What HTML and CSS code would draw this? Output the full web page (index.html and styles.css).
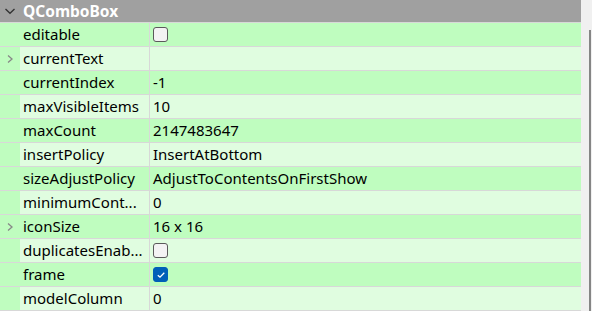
FILE: index.html
```html
<!DOCTYPE html>
<html>
<head>
<meta charset="utf-8">
<link rel="stylesheet" href="styles.css">
</head>
<body>
<div class="wrap">
  <div class="tree">
    <div class="group">
      <span class="branch"><svg width="12" height="8" viewBox="0 0 12 8"><path d="M1.5 2 L6 6.2 L10.5 2" fill="none" stroke="#333" stroke-width="1.4"/></svg></span>
      <span class="gtitle">QComboBox</span>
    </div>
    <div class="row dark"><span class="branch"></span><span class="name">editable</span><span class="val"><span class="cb"></span></span></div>
    <div class="row light"><span class="branch"><svg width="8" height="10" viewBox="0 0 8 10"><path d="M2 1.5 L6 5 L2 8.5" fill="none" stroke="#888" stroke-width="1.3"/></svg></span><span class="name">currentText</span><span class="val"></span></div>
    <div class="row dark"><span class="branch"></span><span class="name">currentIndex</span><span class="val">-1</span></div>
    <div class="row light"><span class="branch"></span><span class="name">maxVisibleItems</span><span class="val">10</span></div>
    <div class="row dark"><span class="branch"></span><span class="name">maxCount</span><span class="val">2147483647</span></div>
    <div class="row light"><span class="branch"></span><span class="name">insertPolicy</span><span class="val">InsertAtBottom</span></div>
    <div class="row dark"><span class="branch"></span><span class="name">sizeAdjustPolicy</span><span class="val">AdjustToContentsOnFirstShow</span></div>
    <div class="row light"><span class="branch"></span><span class="name">minimumCont...</span><span class="val">0</span></div>
    <div class="row dark"><span class="branch"><svg width="8" height="10" viewBox="0 0 8 10"><path d="M2 1.5 L6 5 L2 8.5" fill="none" stroke="#888" stroke-width="1.3"/></svg></span><span class="name">iconSize</span><span class="val">16 x 16</span></div>
    <div class="row light"><span class="branch"></span><span class="name">duplicatesEnab...</span><span class="val"><span class="cb"></span></span></div>
    <div class="row dark"><span class="branch"></span><span class="name">frame</span><span class="val"><span class="cb on"><svg width="10" height="8" viewBox="0 0 10 8"><path d="M1.8 4.2 L4 6.2 L8.3 1.8" fill="none" stroke="#fff" stroke-width="1.3"/></svg></span></span></div>
    <div class="row light"><span class="branch"></span><span class="name">modelColumn</span><span class="val">0</span></div>
  </div>
  <div class="sb"><div class="thumb"></div></div>
</div>
</body>
</html>
```
FILE: styles.css
```css
html, body { margin: 0; padding: 0; }
body {
  background: #f0f0f0;
  font-family: "Noto Sans", "Open Sans", sans-serif;
  font-size: 15px;
  color: #000;
  overflow: hidden;
}
.wrap { display: flex; height: 311px; }
.tree { width: 581px; background: #fff; }
.group {
  height: 22px;
  background: #a0a0a0;
  border-bottom: 1px solid #d8d8d8;
  display: flex;
  align-items: center;
}
.branch {
  width: 20px;
  flex: none;
  align-self: stretch;
  display: flex;
  align-items: center;
  justify-content: center;
}
.gtitle {
  color: #fff;
  font-weight: bold;
  font-size: 15.5px;
  padding-left: 3px;
}
.row {
  height: 23px;
  border-bottom: 1px solid #d8d8d8;
  display: flex;
  align-items: stretch;
  line-height: 23px;
}
.row .branch { background: #bffdbf; }
.dark { background: #bffdbf; }
.light { background: #e0fde0; }
.name {
  width: 126px;
  flex: none;
  padding-left: 3px;
  border-right: 1px solid #d8d8d8;
  white-space: nowrap;
  overflow: visible;
}
.val {
  flex: 1;
  padding-left: 3px;
  display: flex;
  align-items: center;
  white-space: nowrap;
}
.cb {
  width: 13px;
  height: 13px;
  border: 1px solid #5a5a5a;
  border-radius: 3px;
  background: #f3f3f3;
  display: flex;
  align-items: center;
  justify-content: center;
}
.cb.on { background: #005fb8; border-color: #005fb8; }
.sb { flex: 1; position: relative; }
.thumb {
  position: absolute;
  right: 1px;
  top: 30px;
  bottom: 0;
  width: 2px;
  background: #858585;
}
```
